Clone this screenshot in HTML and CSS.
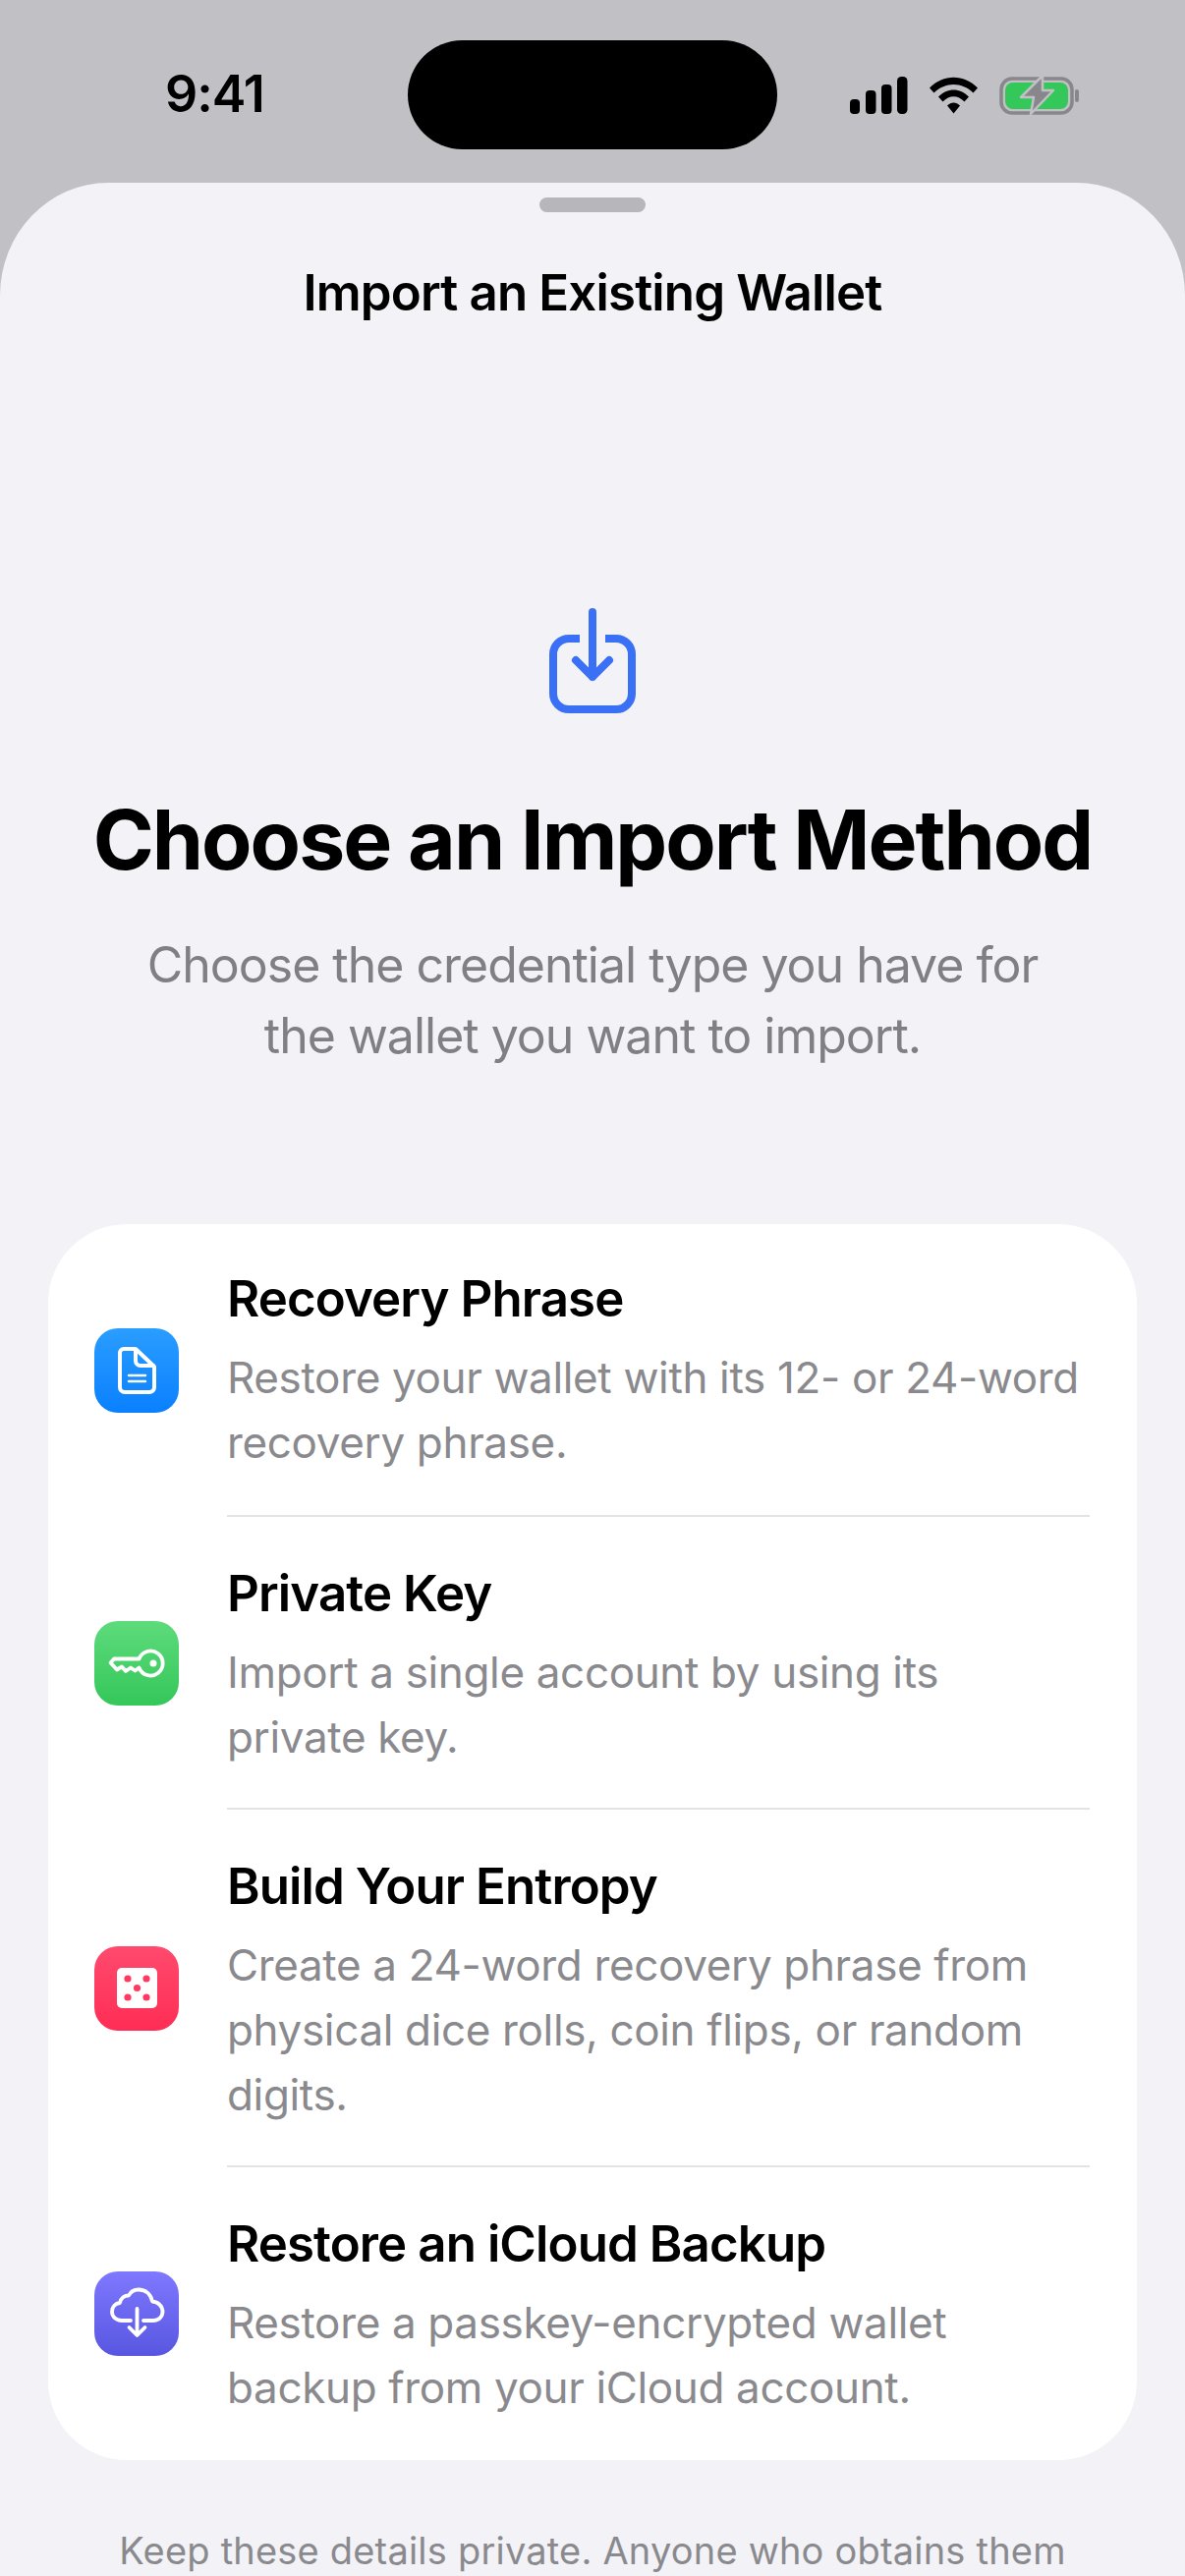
FILE: index.html
```html
<!DOCTYPE html>
<html lang="en">

<head>

 <meta charset="UTF-8">
 <meta name="viewport" content="width=device-width">

 <title>Import an Existing Wallet</title>

 <!-- Estilos CSS -->
 <link rel="stylesheet" href="styles.css">

</head>

<body>

 <header class="status">
  <div class="status-time">9:41</div>
  <div class="island"></div>
  <div class="status-icons">
   <svg class="status-svg" width="236" height="40" viewBox="0 0 236 40">
    <!-- señal -->
    <rect x="1" y="23" width="10" height="15" rx="4" />
    <rect x="17" y="14" width="10.5" height="24" rx="4" />
    <rect x="33" y="8" width="10.5" height="30" rx="4" />
    <rect x="49" y="0" width="10.5" height="38" rx="4.5" />
    <!-- wifi -->
    <path d="M82 11.5 C96 -3 117 -3 131 11.5 L126.5 16.5 C115 5 98 5 86.5 16.5 Z" />
    <path d="M91 20.5 C100 11 113 11 122 20.5 L117.5 25.5 C110.5 18.5 102.5 18.5 95.5 25.5 Z" />
    <path d="M100 29.5 C104 25.5 109 25.5 113 29.5 L106.5 37.5 Z" />
    <!-- batería -->
    <rect x="155" y="2" width="72" height="35" rx="11" fill="none" stroke="#88888c" stroke-width="3.5" />
    <rect x="159" y="6" width="64" height="27" rx="8" fill="#34c759" />
    <rect x="230" y="13" width="4" height="13" rx="2" fill="#88888c" />
    <path d="M197 -1 L175 21 H188 L185 38 L208 14 H197 Z" fill="#88888c" stroke="#c1c1c5" stroke-width="2.5" stroke-linejoin="round" />
   </svg>
  </div>
 </header>

 <main class="sheet">

  <div class="grabber"></div>

  <h2 class="nav-title">Import an Existing Wallet</h2>

  <svg class="hero-icon" width="92" height="111" viewBox="0 0 92 111" fill="none" stroke="#3a70f5" stroke-width="8" stroke-linecap="round" stroke-linejoin="round">
   <path d="M46 6 V72 M29 55 L46 72 L63 55" />
   <path d="M33 33 H22 A16 16 0 0 0 6 49 V89 A16 16 0 0 0 22 105 H70 A16 16 0 0 0 86 89 V49 A16 16 0 0 0 70 33 H59" stroke-linecap="butt" />
  </svg>

  <h1 class="heading">Choose an Import Method</h1>

  <p class="intro">Choose the credential type you have for<br>the wallet you want to import.</p>

  <section class="card">

   <div class="row">
    <div class="tile tile-blue">
     <svg width="86" height="86" viewBox="0 0 86 86" fill="none" stroke="#fff" stroke-width="4" stroke-linejoin="round" stroke-linecap="round">
      <path d="M30 21 H42 L61 39 V60 A5 5 0 0 1 56 65 H31 A5 5 0 0 1 26 60 V25 A4 4 0 0 1 30 21 Z" />
      <path d="M42 22 V33 A5 5 0 0 0 47 38 H60" />
      <path d="M35 48 H52 M35 54 H52" stroke-width="2.5" />
     </svg>
    </div>
    <div class="row-text">
     <h3 class="row-title">Recovery Phrase</h3>
     <p class="row-desc">Restore your wallet with its 12- or 24-word recovery phrase.</p>
    </div>
   </div>

   <div class="row">
    <div class="tile tile-green">
     <svg width="86" height="86" viewBox="0 0 86 86" fill="none" stroke="#fff" stroke-width="3.8" stroke-linejoin="round">
      <path d="M45.5 38.5 H20 L16.5 42.5 L23 49.5 L28 46.5 L32 51 L37 47.5 L41.5 50.5 L45.5 47.5 A12.5 12.5 0 1 0 45.5 38.5 Z" />
      <circle cx="60" cy="43" r="3.5" fill="#fff" stroke="none" />
     </svg>
    </div>
    <div class="row-text">
     <h3 class="row-title">Private Key</h3>
     <p class="row-desc">Import a single account by using its private key.</p>
    </div>
   </div>

   <div class="row">
    <div class="tile tile-red">
     <svg width="86" height="86" viewBox="0 0 86 86">
      <rect x="23" y="22" width="41" height="41" rx="5" fill="#fff" />
      <g fill="#ff3a62">
       <circle cx="34" cy="33" r="3.6" />
       <circle cx="53" cy="33" r="3.6" />
       <circle cx="43.5" cy="42.5" r="3.6" />
       <circle cx="34" cy="52" r="3.6" />
       <circle cx="53" cy="52" r="3.6" />
      </g>
     </svg>
    </div>
    <div class="row-text">
     <h3 class="row-title">Build Your Entropy</h3>
     <p class="row-desc">Create a 24-word recovery phrase from physical dice rolls, coin flips, or random digits.</p>
    </div>
   </div>

   <div class="row">
    <div class="tile tile-purple">
     <svg width="86" height="86" viewBox="0 0 86 86" fill="none" stroke="#fff" stroke-width="3.8" stroke-linecap="round" stroke-linejoin="round">
      <path d="M37 50 H28 C22 50 18 46 18 41 C18 36 21.5 32.5 26 32 C27 27 31 24.5 35 24.5 C37 20.5 40.5 18.5 45 18.5 C52 18.5 57.5 23 59 30.5 C65 31 69.5 35.5 69.5 41 C69.5 46 65.5 50 60 50 H50" />
      <path d="M43.5 38 V64 M35.5 57 L43.5 65 L51.5 57" />
     </svg>
    </div>
    <div class="row-text">
     <h3 class="row-title">Restore an iCloud Backup</h3>
     <p class="row-desc">Restore a passkey-encrypted wallet backup from your iCloud account.</p>
    </div>
   </div>

  </section>

  <p class="note">Keep these details private. Anyone who obtains them</p>

 </main>

</body>

</html>
```

FILE: styles.css
```css
/* Configuración básica */
* {
    margin: 0;
    padding: 0;
    box-sizing: border-box;
}

body {
    width: 1206px;
    height: 2622px;
    overflow: hidden;
    background-color: #c1c1c5;
    color: #000;
    font-family: Inter, "Noto Sans", sans-serif;
}

/* Barra de estado */
.status {
    display: grid;
    grid-template-columns: 415px 376px 1fr;
    height: 186px;
    padding-top: 41px;
    align-items: start;
}

.status-time {
    padding: 23px 0 0 168px;
    font-size: 52px;
    line-height: 64px;
    font-weight: 600;
    letter-spacing: -1px;
}

.island {
    height: 111px;
    background-color: #000;
    border-radius: 56px;
}

.status-icons {
    padding: 37px 0 0 73px;
}

.status-svg {
    display: block;
    overflow: visible;
}

/* Hoja */
.sheet {
    min-height: 2436px;
    background-color: #f2f2f7;
    border-radius: 110px 110px 0 0 / 115px 115px 0 0;
    display: flex;
    flex-direction: column;
    align-items: center;
}

.grabber {
    width: 108px;
    height: 15px;
    margin-top: 15px;
    background-color: #b6b6bb;
    border-radius: 8px;
}

.nav-title {
    margin-top: 52px;
    font-size: 51px;
    line-height: 60px;
    font-weight: 600;
    letter-spacing: -0.85px;
}

.hero-icon {
    display: block;
    flex: none;
    margin-top: 289px;
}

.heading {
    margin-top: 77px;
    font-size: 84px;
    line-height: 100px;
    font-weight: 700;
    letter-spacing: -2px;
}

.intro {
    margin-top: 41px;
    font-size: 50px;
    line-height: 72px;
    text-align: center;
    color: #7f7f84;
    letter-spacing: -1px;
}

/* Tarjeta de métodos */
.card {
    width: 1108px;
    margin-top: 156px;
    background-color: #fff;
    border-radius: 80px;
}

.row {
    display: flex;
    align-items: center;
    gap: 49px;
    padding-left: 47px;
}

.tile {
    flex: none;
    width: 86px;
    height: 86px;
    border-radius: 24px;
}

.tile svg {
    display: block;
}

.tile-blue {
    background: linear-gradient(#2a9dff, #0a80ff);
}

.tile-green {
    background: linear-gradient(#5edb7c, #34c759);
}

.tile-red {
    background: linear-gradient(#ff4a6e, #ff2d55);
}

.tile-purple {
    background: linear-gradient(#7f78ff, #5856e0);
}

.row-text {
    flex: 1;
    padding: 46px 0 41px;
    margin-right: 48px;
    border-bottom: 2px solid #e3e3e6;
}

.row + .row .row-text {
    padding-top: 48px;
    padding-bottom: 39px;
}

.row:last-child .row-text {
    padding-bottom: 41px;
    border-bottom: none;
}

.row-title {
    font-size: 51px;
    line-height: 60px;
    font-weight: 600;
    letter-spacing: -0.9px;
}

.row-desc {
    max-width: 869px;
    margin-top: 17px;
    font-size: 44px;
    line-height: 66px;
    color: #8a8a8e;
    letter-spacing: -0.35px;
}

.note {
    margin-top: 62px;
    font-size: 38px;
    line-height: 60px;
    color: #8a8a8e;
    text-align: center;
    letter-spacing: 0.2px;
}
```
